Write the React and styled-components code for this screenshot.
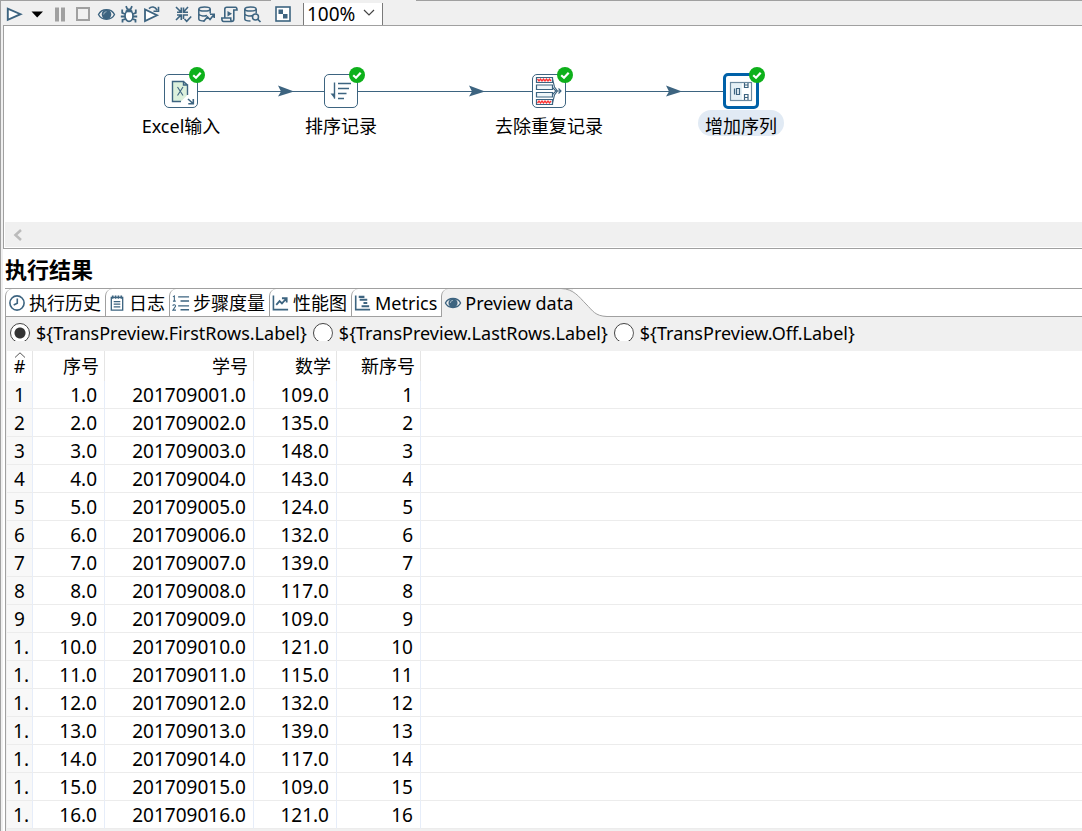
import React, { useState } from 'react'
import styled, { createGlobalStyle } from 'styled-components'

const ink = '#3d6480'

const GlobalStyle = createGlobalStyle`
    * {
        box-sizing: border-box;
    }
    body {
        margin: 0;
        background: #f0f0f0;
        color: #000;
        font-family: "Noto Sans", "Noto Sans CJK SC", sans-serif;
        font-size: 18px;
    }
    button, select, input {
        font: inherit;
        color: inherit;
        margin: 0;
        padding: 0;
        border: 0;
        background: none;
    }
`
const Window = styled.div`
    height: 100vh;
    display: flex;
    flex-direction: column;
    overflow: hidden;
    border-left: 1px solid #a0a0a0;
`
const Toolbar = styled.div`
    flex: none;
    height: 25px;
    display: flex;
    align-items: center;
    padding: 3px 0 0 2px;
    background: linear-gradient(#a0a0a0, #a0a0a0) 0 0 / 270px 1px no-repeat,
        linear-gradient(#a0a0a0, #a0a0a0) 415px 0 / 100% 1px no-repeat;
`
const ToolButton = styled.button`
    width: 23px;
    height: 22px;
    margin-right: ${(props) => (props.$last ? '8px' : '0')};
    display: flex;
    align-items: center;
    justify-content: center;
`
const ZoomBox = styled.label`
    display: grid;
    align-items: center;
    width: 80px;
    height: 22px;
    margin-left: 8px;
    background: #fff;
    border: solid #7a7a7a;
    border-width: 0 1px;

    & > * {
        grid-area: 1 / 1;
    }
    svg {
        justify-self: end;
        margin: 0 7px 2px 0;
        pointer-events: none;
    }
`
const ZoomSelect = styled.select`
    appearance: none;
    width: 100%;
    height: 22px;
    padding-left: 3px;
    font-size: 19px;
    line-height: 20px;
`
const Editor = styled.section`
    flex: none;
    margin-left: 2px;
    background: #fff;
    border: solid #a0a0a0;
    border-width: 1px 0 1px 1px;
`
const Canvas = styled.div`
    position: relative;
    height: 196px;
`
const Hops = styled.svg`
    position: absolute;
    left: 0;
    top: 0;
`
const Node = styled.div`
    position: absolute;
    left: ${(props) => props.$x}px;
    top: 47px;
    width: 140px;
    margin-left: -70px;
    display: grid;
    grid-template-rows: 36px 26px;
    row-gap: 1px;
    place-items: center;
`
const NodeBox = styled.div`
    position: relative;
    width: ${(props) => (props.$selected ? '36px' : '34px')};
    height: ${(props) => (props.$selected ? '36px' : '34px')};
    display: flex;
    align-items: center;
    justify-content: center;
    background: #fff;
    border: ${(props) => (props.$selected ? '3px solid #0061a8' : '1px solid #3d6480')};
    border-radius: 5px;

    svg {
        flex: none;
    }
`
const Badge = styled.svg`
    position: absolute;
    right: ${(props) => (props.$selected ? '-9px' : '-8px')};
    top: ${(props) => (props.$selected ? '-9px' : '-8px')};
`
const NodeLabel = styled.span`
    height: 26px;
    padding: 0 7px;
    line-height: 32px;
    white-space: nowrap;
    border-radius: 13px;
    background: ${(props) => (props.$selected ? '#e1eaf4' : 'none')};
`
const ScrollTrack = styled.div`
    height: 25px;
    margin: 0 0 1px 1px;
    background: #f0f0f0;
`
const ScrollButton = styled.button`
    width: 25px;
    height: 25px;
    display: flex;
    align-items: center;
    justify-content: center;
`
const Results = styled.section`
    flex: 1;
    min-height: 0;
    margin-left: 2px;
    display: flex;
    flex-direction: column;
    background: #fff;
`
const Title = styled.h2`
    flex: none;
    margin: 0;
    height: 39px;
    padding: 4px 0 0 2px;
    font-size: 22px;
    line-height: 32px;
    font-weight: bold;
`
const Tabs = styled.div`
    flex: none;
    height: 29px;
    margin-left: 2px;
    display: flex;
    border-top: 1px solid #a0a0a0;
    box-shadow: inset 0 -1px #a0a0a0;
`
const Tab = styled.button`
    height: 28px;
    display: flex;
    align-items: center;
    gap: 3px;
    padding: 0 ${(props) => (props.$active ? '0' : '4px')} 0 2px;
    white-space: nowrap;
    line-height: 28px;
    border-left: 1px solid #a0a0a0;
    border-top-left-radius: 7px;
    background: ${(props) => (props.$active ? '#f0f0f0' : 'none')};
`
const TabText = styled.span`
    position: relative;
    z-index: 1;
`
const Slope = styled.svg`
    flex: none;
    margin-left: -12px;
`
const Panel = styled.div`
    flex: 1;
    min-height: 0;
    margin-left: 2px;
    overflow: hidden;
    border-left: 1px solid #a0a0a0;
    background: #f0f0f0;
`
const Options = styled.div`
    height: 34px;
    display: flex;
    gap: 6px;
    padding: 4px 0 0 4px;
`
const Option = styled.label`
    display: flex;
    gap: 6px;
    height: 26px;
    line-height: 24px;
    white-space: nowrap;
`
const Radio = styled.input`
    appearance: none;
    flex: none;
    width: 20px;
    height: 20px;
    margin-top: 2px;
    border: 1px solid #444;
    border-radius: 50%;
    clip-path: inset(0 0 2px 0);
    background: ${(props) => (props.checked ? 'radial-gradient(circle, #333 5px, #fff 6px)' : '#fff')};
`
const Grid = styled.table`
    width: calc(100% - 1px);
    margin-left: 1px;
    table-layout: fixed;
    border-collapse: separate;
    border-spacing: 0;
    background: #fff;
`
const HeadCell = styled.th`
    height: 30px;
    padding: 0 5px 0 0;
    font-weight: normal;
    text-align: right;
    line-height: 28px;
    border-right: ${(props) => (props.$blank ? '0' : '1px solid #e5e5e5')};
`
const SortHead = styled.div`
    display: flex;
    flex-direction: column;
    align-items: center;
    height: 28px;
    line-height: 16px;
    margin-right: -5px;
`
const Cell = styled.td`
    height: 28px;
    padding: 1px 7px 0 0;
    font-size: 19px;
    line-height: 26px;
    text-align: right;
    border-right: ${(props) => (props.$blank ? '0' : '1px solid #e6edf9')};
    border-bottom: 1px solid #ececec;
`
const IndexCell = styled(Cell)`
    padding-right: ${(props) => (props.$cut ? '3px' : '0')};
    text-align: ${(props) => (props.$cut ? 'right' : 'center')};
    background: #f8f8f8;
`

const Icon = ({ size = 19, children }) => (
    <svg width={size} height={size} viewBox="0 0 19 19" fill="none" stroke={ink} strokeWidth="1.7" aria-hidden="true">
        {children}
    </svg>
)

const EyeIcon = ({ size }) => (
    <Icon size={size}>
        <path d="M1.5 9.5C4.5 3.2 14.5 3.2 17.5 9.5C14.5 15.8 4.5 15.8 1.5 9.5Z" strokeWidth="1.4" />
        <circle cx="9.5" cy="9.5" r="4.8" fill={ink} stroke="none" />
        <path d="M9.5 6.7A2.8 2.8 0 0 0 6.7 9.5" stroke="#9eb3c1" strokeWidth="1" />
    </Icon>
)

const Database = () => (
    <>
        <ellipse cx="7.5" cy="4" rx="5.7" ry="2.1" strokeWidth="1.5" />
        <path d="M1.8 4V14C1.8 15.3 4.5 16 7.5 16M1.8 9C3 11.3 8 11.3 10 10.5M13.2 4V8.5" strokeWidth="1.5" />
    </>
)

const tools = [
    { name: 'Run', icon: <Icon><path d="M2.8 3.6V14.8L15.5 9.2Z" fill="#fff" strokeWidth="1.9" /></Icon> },
    { name: 'Run options', icon: <Icon><path d="M3.5 6.5H15L9.2 12.5Z" fill="#000" stroke="none" /></Icon> },
    { name: 'Pause', icon: <Icon><path d="M6 2.5V16.5M12 2.5V16.5" stroke="#a0a0a0" strokeWidth="4" /></Icon> },
    { name: 'Stop', icon: <Icon><rect x="3" y="3" width="12" height="12" stroke="#a0a0a0" strokeWidth="2" /></Icon> },
    { name: 'Preview', icon: <EyeIcon /> },
    {
        name: 'Debug',
        icon: (
            <Icon>
                <ellipse cx="9" cy="11" rx="4" ry="5.3" fill="#fff" />
                <path d="M6 6.8C6 3 12 3 12 6.8Z" fill={ink} strokeWidth="1" />
                <path d="M6 1.2L7.5 4.5M12 1.2L10.5 4.5M5 9L2.2 7.8V4.5M13 9L15.8 7.8V4.5M5 11.5H.8M13 11.5H17.2M5.5 14L2.5 15V17.5M12.5 14L15.5 15V17.5" strokeWidth="1.8" />
            </Icon>
        ),
    },
    {
        name: 'Replay',
        last: true,
        icon: (
            <Icon>
                <path d="M2 4.5V16L14 10.3Z" fill="#fff" strokeWidth="1.8" />
                <path d="M6 3.6C8.5 1 12 1.5 14 5M15.5 1.8V6.2H10.5" strokeWidth="1.6" />
            </Icon>
        ),
    },
    {
        name: 'Verify',
        icon: (
            <Icon>
                <path d="M2 2L7 7M14 2L9.5 7M2 15L7 10M3 7.2H7.3V2.5M14 7.2H9.5V2.5M3 10H7.3V15M9.5 14V10H14" strokeWidth="1.6" />
                <path d="M10.5 14L12.7 16.3L17.2 11.5" strokeWidth="1.6" />
            </Icon>
        ),
    },
    { name: 'Impact', icon: <Icon><Database /><path d="M6.5 16.5L10.5 12L13 14.5L17 9.5M13 9.2H17.2V13" strokeWidth="1.6" /></Icon> },
    {
        name: 'SQL',
        icon: (
            <Icon>
                <path d="M4.8 12.5V4.3Q4.8 2.3 6.8 2.3H15.5Q17 2.3 17 5H13.8V14Q13.8 16.5 11.5 16.5H3.5Q1.8 16.5 1.8 13H10.7Q10.7 16.5 12 16.5" strokeWidth="1.6" />
                <path d="M7.5 6V11.5L12 8.7Z" fill={ink} stroke="none" />
            </Icon>
        ),
    },
    {
        name: 'Explore database',
        last: true,
        icon: <Icon><Database /><circle cx="12.5" cy="12" r="3" strokeWidth="1.5" /><path d="M14.5 14L17.5 17" strokeWidth="1.7" /></Icon>,
    },
    {
        name: 'Show results',
        icon: (
            <Icon>
                <rect x="2" y="2" width="14" height="14" fill="#fff" strokeWidth="1.6" />
                <path d="M4.5 4.5H9V9H4.5ZM9 9H13.5V13.5H9Z" fill={ink} stroke="none" />
            </Icon>
        ),
    },
]

const ExcelIcon = () => (
    <svg width="34" height="34" viewBox="0 0 34 34" fill="none" stroke={ink} aria-hidden="true">
        <path d="M8.5 7.5H19L23.5 11V21L17 27.5H8.5Z" fill="#dcf0dc" stroke="none" />
        <path d="M17 27.5H8.5V7.5H19.5V11H23.5V21M19.5 7.5L23.5 11" strokeWidth="1.4" />
        <path d="M13.5 13L19 21.5M19 13L13.5 21.5" strokeWidth="1.1" />
        <path d="M24 25L29 29.5M29.3 25V29.8H24.3" strokeWidth="1.6" />
    </svg>
)
const SortIcon = () => (
    <svg width="34" height="34" viewBox="0 0 34 34" fill="none" stroke={ink} strokeWidth="1.4" aria-hidden="true">
        <path d="M10.5 8.5V24.5M14 9.5H27M14 14.5H25M14 19.5H22.5M14 24.5H20" />
        <path d="M6.5 19.5H11V25Z" fill={ink} stroke="none" />
    </svg>
)
const UniqueIcon = () => (
    <svg width="34" height="34" viewBox="0 0 34 34" fill="none" stroke={ink} strokeWidth="1.2" aria-hidden="true">
        <path d="M4.5 3.5H20.5V8.5H4.5ZM4.5 11H20.5V15.5H4.5ZM4.5 18.5H20.5V23H4.5ZM4.5 25.5H20.5V30.5H4.5Z" fill="#f1f7fa" />
        <path d="M5.5 5L7 7L8.5 5L10 7L11.5 5L13 7L14.5 5L16 7L17.5 5L19 7M5.5 29L7 27L8.5 29L10 27L11.5 29L13 27L14.5 29L16 27L17.5 29L19 27" stroke="#f33" strokeWidth="1.3" />
        <path d="M20.5 5L22.5 13L25.5 17M20.5 29L22.5 21L25.5 17M20.5 13.5L24 17L20.5 20.5M24 17H29M26.5 14.5L29 17L26.5 19.5" strokeWidth="1.1" />
    </svg>
)
const SequenceIcon = () => (
    <svg width="30" height="30" viewBox="0 0 30 30" fill="none" stroke={ink} strokeWidth="1.2" aria-hidden="true">
        <path d="M4.5 6.5H16V24.5H4.5Z" fill="#e6f1f6" stroke="none" />
        <rect x="4.5" y="6.5" width="21" height="18" stroke="#6d8a9f" />
        <path d="M8.5 12.5V18.5M10.5 12.5H13.5V18.5H10.5ZM18.5 7V11.5H22V7M18.5 9H22M18.5 24V18.5H22V21.5H18.5M22 21.5V24" />
    </svg>
)

const nodes = [
    { x: 177, label: 'Excel输入', icon: <ExcelIcon /> },
    { x: 337, label: '排序记录', icon: <SortIcon /> },
    { x: 545, label: '去除重复记录', icon: <UniqueIcon /> },
    { x: 737, label: '增加序列', icon: <SequenceIcon />, selected: true },
]

const tabs = [
    { label: '执行历史', icon: <Icon size={18}><circle cx="9.5" cy="9.5" r="7.5" /><path d="M9.8 4.8V9.8L6 11.5" /></Icon> },
    {
        label: '日志',
        icon: (
            <Icon size={18}>
                <path d="M3.5 3.5H15.5V17H3.5ZM6 8H13M6 10.7H13M6 13.5H13" strokeWidth="1.4" />
                <path d="M5 1.5V5M8 1.5V5M11 1.5V5M14 1.5V5" strokeWidth="1.8" />
            </Icon>
        ),
    },
    {
        label: '步骤度量',
        icon: (
            <Icon size={18}>
                <path d="M6.5 3H18M9 7.3H18M6.5 12.5H18M9 16.7H18" strokeWidth="1.5" />
                <path d="M1 3L2.5 2V7.5M1 7.5H4M.8 12.5C1.2 11 4 11 3.7 13L.9 17H4.2" strokeWidth="1.1" />
            </Icon>
        ),
    },
    { label: '性能图', icon: <Icon size={18}><path d="M1.5 1.5V16.5H17" /><path d="M4.5 11.5L8 7.5L10.5 10L15 5M10.5 4.5H15.5V9" strokeWidth="1.9" /></Icon> },
    {
        label: 'Metrics',
        icon: (
            <Icon size={18}>
                <path d="M1.8 1.5V16.5H17" />
                <path d="M5 3H11M6 6H14M10 9.5H14M8 13H16" strokeWidth="2.2" />
            </Icon>
        ),
    },
    { label: 'Preview data', icon: <EyeIcon size={18} /> },
]

const options = ['FirstRows', 'LastRows', 'Off']

const columns = [
    { label: '序号', width: 72 },
    { label: '学号', width: 149 },
    { label: '数学', width: 83 },
    { label: '新序号', width: 84 },
]

const scores = [109, 135, 148, 143, 124, 132, 139, 117, 109, 121, 115, 132, 139, 117, 109, 121]
const rows = scores.map((score, i) => ({
    index: i < 9 ? String(i + 1) : '1.',
    cells: [`${i + 1}.0`, `${201709001 + i}.0`, `${score}.0`, i + 1],
}))

function App() {
    const [tab, setTab] = useState('Preview data')
    const [option, setOption] = useState('FirstRows')

    return (
        <Window>
            <GlobalStyle />
            <Toolbar>
                {tools.map((tool) => (
                    <ToolButton key={tool.name} type="button" aria-label={tool.name} $last={tool.last}>
                        {tool.icon}
                    </ToolButton>
                ))}
                <ZoomBox>
                    <ZoomSelect aria-label="Zoom" defaultValue="100%">
                        <option>100%</option>
                    </ZoomSelect>
                    <svg width="12" height="8" viewBox="0 0 12 8" fill="none" stroke="#444" strokeWidth="1.2" aria-hidden="true">
                        <path d="M1 1L6 6L11 1" />
                    </svg>
                </ZoomBox>
            </Toolbar>

            <Editor>
                <Canvas>
                    <Hops width="760" height="120" stroke={ink} fill={ink} aria-hidden="true">
                        <path d="M177 65.5H737" />
                        <path d="M274 59.5L290 65.5L274 70.5L277 65.5ZM465 59.5L481 65.5L465 70.5L468 65.5ZM662 59.5L678 65.5L662 70.5L665 65.5Z" stroke="none" />
                    </Hops>
                    {nodes.map((node) => (
                        <Node key={node.label} $x={node.x}>
                            <NodeBox $selected={node.selected}>
                                {node.icon}
                                <Badge width="16" height="16" viewBox="0 0 16 16" $selected={node.selected} aria-hidden="true">
                                    <circle cx="8" cy="8" r="8" fill="#0eb01b" />
                                    <path d="M4.2 8.2L7 10.8L11.7 5.7" fill="none" stroke="#fff" strokeWidth="2.2" />
                                </Badge>
                            </NodeBox>
                            <NodeLabel $selected={node.selected}>{node.label}</NodeLabel>
                        </Node>
                    ))}
                </Canvas>
                <ScrollTrack>
                    <ScrollButton type="button" aria-label="Scroll left">
                        <svg width="10" height="12" viewBox="0 0 10 12" fill="none" stroke="#bbb" strokeWidth="2.6" aria-hidden="true">
                            <path d="M8 1L2.5 6L8 11" />
                        </svg>
                    </ScrollButton>
                </ScrollTrack>
            </Editor>

            <Results>
                <Title>执行结果</Title>
                <Tabs role="tablist">
                    {tabs.map(({ label, icon }) => (
                        <React.Fragment key={label}>
                            <Tab type="button" role="tab" aria-selected={tab === label} $active={tab === label} onClick={() => setTab(label)}>
                                {icon}
                                <TabText>{label}</TabText>
                            </Tab>
                            {tab === label && (
                                <Slope width="46" height="28" viewBox="0 0 46 28" aria-hidden="true">
                                    <path d="M0 0C13 0 18 8 25 15C32 22 34 27 46 27.5V28H0Z" fill="#f0f0f0" />
                                    <path d="M0 -.5C13 0 18 8 25 15C32 22 34 27 46 27.5" fill="none" stroke="#a0a0a0" />
                                </Slope>
                            )}
                        </React.Fragment>
                    ))}
                </Tabs>
                <Panel>
                    <Options>
                        {options.map((name) => (
                            <Option key={name}>
                                <Radio type="radio" name="rows" checked={option === name} onChange={() => setOption(name)} />
                                {'${TransPreview.' + name + '.Label}'}
                            </Option>
                        ))}
                    </Options>
                    <Grid>
                        <colgroup>
                            <col width="26" />
                            {columns.map((column) => (
                                <col key={column.label} width={column.width} />
                            ))}
                            <col />
                        </colgroup>
                        <thead>
                            <tr>
                                <HeadCell>
                                    <SortHead>
                                        <svg width="12" height="6" viewBox="0 0 12 6" fill="none" stroke="#555" aria-hidden="true">
                                            <path d="M1 5.5L6 .8L11 5.5" />
                                        </svg>
                                        #
                                    </SortHead>
                                </HeadCell>
                                {columns.map((column) => (
                                    <HeadCell key={column.label}>{column.label}</HeadCell>
                                ))}
                                <HeadCell $blank />
                            </tr>
                        </thead>
                        <tbody>
                            {rows.map((row) => (
                                <tr key={row.cells[3]}>
                                    <IndexCell $cut={row.index === '1.'}>{row.index}</IndexCell>
                                    {row.cells.map((value, i) => (
                                        <Cell key={columns[i].label}>{value}</Cell>
                                    ))}
                                    <Cell $blank />
                                </tr>
                            ))}
                        </tbody>
                    </Grid>
                </Panel>
            </Results>
        </Window>
    )
}

export default App
